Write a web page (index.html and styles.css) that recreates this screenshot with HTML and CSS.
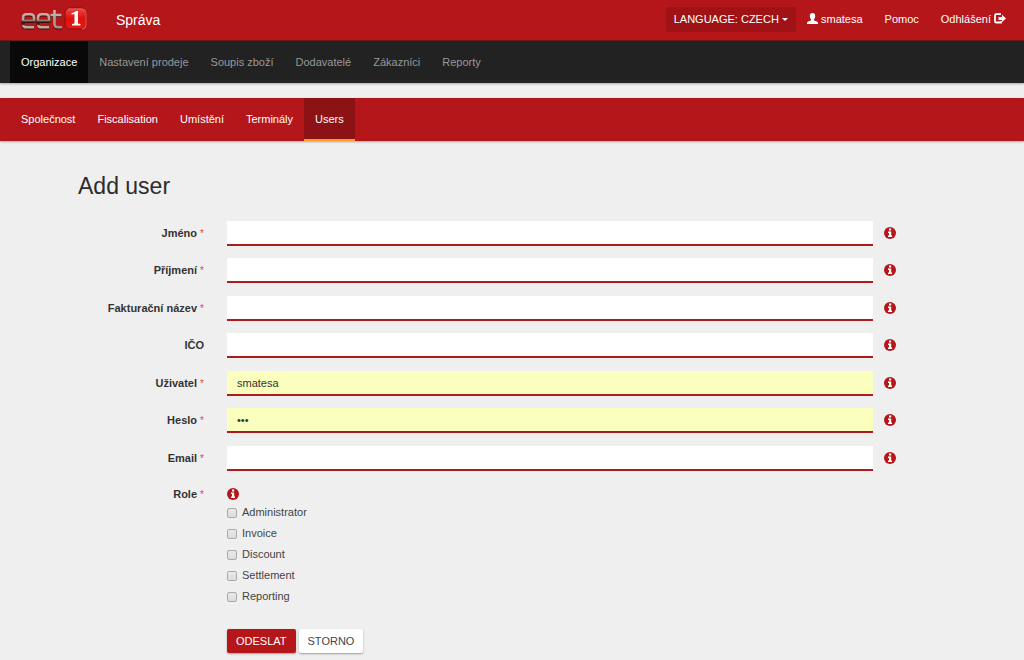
FILE: index.html
```html
<!DOCTYPE html>
<html lang="cs">
<head>
<meta charset="utf-8">
<title>Add user</title>
<link rel="stylesheet" href="styles.css">
</head>
<body>
<svg class="defs" aria-hidden="true">
  <symbol id="info" viewBox="0 0 12 12"><circle cx="6" cy="6" r="6" fill="#b5161a"/><path fill="#fff" d="M5 1.6h2.2v2H5zM4 4.5h3.2v4H8V10H4V8.500h1V6H4z"/></symbol>
</svg>
<header class="topbar">
  <a class="logo" href="#" aria-label="eet1">
    <svg width="67" height="24" viewBox="0 0 67 24">
      <defs>
        <linearGradient id="metal" gradientUnits="userSpaceOnUse" x1="0" y1="4" x2="0" y2="22"><stop offset="0" stop-color="#cdb9ae"/><stop offset=".5" stop-color="#b59a92"/><stop offset=".62" stop-color="#3a1210"/><stop offset=".74" stop-color="#4a1b18"/><stop offset=".82" stop-color="#c4a79e"/><stop offset="1" stop-color="#c4a79e"/></linearGradient>
        <linearGradient id="steel" gradientUnits="userSpaceOnUse" x1="0" y1="3" x2="0" y2="22"><stop offset="0" stop-color="#cdb9ae"/><stop offset="1" stop-color="#a78a82"/></linearGradient>
        <linearGradient id="tile" x1="0" y1="0" x2="0" y2="1"><stop offset="0" stop-color="#e8484a"/><stop offset=".5" stop-color="#e0100f"/><stop offset="1" stop-color="#e61b10"/></linearGradient>
      </defs>
      <g fill="none" stroke="#3b0f0e" stroke-width="3">
        <path d="M13 21H5.500Q2 21 2 17.500V11.500Q2 8 5.500 8H9.500Q13 8 13 11.500V14.500H3M28 21h-7.500Q17 21 17 17.500V11.500Q17 8 20.500 8H24.500Q28 8 28 11.500V14.500H18M33.500 4v13.500q0 3.500 3.500 3.500h4M29.500 8.500h11"/>
      </g>
      <g fill="none" stroke="url(#metal)" stroke-width="2.600">
        <path d="M13 20.300H5.500Q2 20.300 2 17V11Q2 7.300 5.500 7.300H9.500Q13 7.300 13 11V14H3M28 20.300h-7.500Q17 20.300 17 17V11Q17 7.300 20.500 7.300H24.500Q28 7.300 28 11V14H18"/>
        <path stroke="url(#steel)" d="M33.500 3v14q0 3.300 3.500 3.300h4M29.500 8h11"/>
      </g>
      <rect x="44" y="1" width="21" height="21" rx="5" fill="url(#tile)" stroke="#8d0d0e"/>
      <path d="M47 2h14q4 0 4 4v12q0 4-4 4" fill="none" stroke="#e2605f"/>
      <path fill="#fff" d="M50.500 6.500l5-2.500h1.500v12.500l2.500.5v1.500h-8.500V17l2.500-.5V7l-3 .5z"/>
    </svg>
  </a>
  <a class="brand" href="#">Správa</a>
  <nav class="account">
    <button class="language" type="button">LANGUAGE: CZECH <span class="caret"></span></button>
    <a href="#"><svg width="11" height="11" viewBox="0 0 11 11"><path fill="currentColor" d="M5.500 0C7.300 0 8.200 1.200 8.200 3c0 1.400-.6 2.600-1.300 3.300v.9c.7.700 3.900 1.100 4.100 2.600V11H0V9.800c.2-1.500 3.400-1.900 4.100-2.600v-.9C3.400 5.600 2.800 4.400 2.800 3 2.800 1.200 3.700 0 5.500 0z"/></svg> smatesa</a>
    <a href="#">Pomoc</a>
    <a href="#">Odhlášení <svg width="12" height="11" viewBox="0 0 12 11"><path fill="none" stroke="currentColor" stroke-width="1.800" d="M7 1.200H2.300Q1 1.200 1 2.500v5.700q0 1.300 1.300 1.300H7V8"/><path fill="currentColor" d="M4.500 4H8V1.800l4 3.600-4 3.600V7H4.500z"/></svg></a>
  </nav>
</header>
<nav class="mainnav">
  <a class="active" href="#">Organizace</a>
  <a href="#">Nastavení prodeje</a>
  <a href="#">Soupis zboží</a>
  <a href="#">Dodavatelé</a>
  <a href="#">Zákazníci</a>
  <a href="#">Reporty</a>
</nav>
<nav class="subnav">
  <a href="#">Společnost</a>
  <a href="#">Fiscalisation</a>
  <a href="#">Umístění</a>
  <a href="#">Terminály</a>
  <a class="active" href="#">Users</a>
</nav>
<main class="content">
  <h1>Add user</h1>
  <form>
    <div class="row"><label class="name" for="first">Jméno <sup>*</sup></label><input class="field" id="first" type="text"><svg class="info"><use href="#info"/></svg></div>
    <div class="row"><label class="name" for="last">Příjmení <sup>*</sup></label><input class="field" id="last" type="text"><svg class="info"><use href="#info"/></svg></div>
    <div class="row"><label class="name" for="billing">Fakturační název <sup>*</sup></label><input class="field" id="billing" type="text"><svg class="info"><use href="#info"/></svg></div>
    <div class="row"><label class="name" for="ico">IČO</label><input class="field" id="ico" type="text"><svg class="info"><use href="#info"/></svg></div>
    <div class="row"><label class="name" for="user">Uživatel <sup>*</sup></label><input class="field filled" id="user" type="text" value="smatesa"><svg class="info"><use href="#info"/></svg></div>
    <div class="row"><label class="name" for="pass">Heslo <sup>*</sup></label><input class="field filled" id="pass" type="password" value="abc"><svg class="info"><use href="#info"/></svg></div>
    <div class="row"><label class="name" for="email">Email <sup>*</sup></label><input class="field" id="email" type="email"><svg class="info"><use href="#info"/></svg></div>
    <div class="row roles" role="group" aria-labelledby="role">
      <span class="name" id="role">Role <sup>*</sup></span>
      <div class="options">
        <svg class="info"><use href="#info"/></svg>
        <label><input type="checkbox">Administrator</label>
        <label><input type="checkbox">Invoice</label>
        <label><input type="checkbox">Discount</label>
        <label><input type="checkbox">Settlement</label>
        <label><input type="checkbox">Reporting</label>
      </div>
    </div>
    <div class="actions">
      <button class="btn primary" type="submit">ODESLAT</button>
      <button class="btn" type="button">STORNO</button>
    </div>
  </form>
</main>
</body>
</html>
```
FILE: styles.css
```css
* { box-sizing: border-box; }
body {
  margin: 0;
  background: #efefef;
  color: #444;
  font: 11px/17px "Liberation Sans", Arial, sans-serif;
}
a { color: inherit; text-decoration: none; }
button, input { font: inherit; }
.defs { display: block; width: 0; height: 0; }
.topbar {
  display: flex;
  align-items: center;
  height: 41px;
  padding: 0 7px 2px 21px;
  background: #b5161a;
  border-bottom: 1px solid #6d1a18;
  color: #fff;
}
.logo, .logo svg { display: block; }
.brand { margin-left: 28px; padding-top: 3px; font-size: 14px; }
.account { display: flex; align-items: center; margin-left: auto; }
.account a { padding: 0 11px; }
.account svg { vertical-align: -1px; }
.language {
  height: 25px;
  padding: 0 8px;
  border: 0;
  border-radius: 2px;
  background: #9f1317;
  color: #fff;
}
.caret {
  display: inline-block;
  border: 3px solid transparent;
  border-top-color: #fff;
  border-bottom: 0;
  vertical-align: middle;
}
.mainnav, .subnav { display: flex; padding-left: 10px; line-height: 42px; }
.mainnav {
  background: #222;
  color: #999;
  box-shadow: 0 1px 2px rgba(0, 0, 0, .3);
}
.mainnav a, .subnav a { padding: 0 11px; }
.mainnav .active { background: #090909; color: #fff; }
.subnav {
  margin-top: 15px;
  background: #b5161a;
  color: #fff;
  line-height: 43px;
  box-shadow: 0 1px 2px rgba(0, 0, 0, .3);
}
.subnav .active { background: #8c1215; box-shadow: inset 0 -2px #ff9a27; }
.content { padding: 31px 128px 6px 78px; }
h1 { margin: 0 0 21px; color: #2c2c2c; font-size: 23px; font-weight: 400; line-height: 28px; }
.row { display: flex; align-items: center; margin-bottom: 12px; }
.name { width: 126px; margin-right: 23px; color: #333; font-weight: 700; text-align: right; }
sup { color: #e04a4a; font-size: 10px; font-weight: 400; line-height: 0; vertical-align: 0; }
.field {
  flex: 1;
  min-width: 0;
  height: 25px;
  padding: 0 10px;
  border: 0;
  border-bottom: 2px solid #ae1a1e;
  border-radius: 0;
  background: #fff;
  color: #333;
}
.row:nth-child(even) { margin-bottom: 13px; }
.filled { background: #faffbd; }
.info { flex: none; width: 12px; height: 12px; margin: 0 0 2px 11px; }
.row.roles { align-items: flex-start; margin: 15px 0 24px; }
.options { display: flex; flex-direction: column; gap: 4px; }
.options .info { margin: 2px 0 0; }
.options label { display: flex; align-items: center; }
.options input {
  appearance: none;
  width: 10px;
  height: 10px;
  margin: 1px 5px 0 0;
  border: 1px solid #aaa;
  border-radius: 2px;
  background: linear-gradient(#e9e9e9, #dcdcdc);
}
.actions { display: flex; gap: 3px; margin-left: 149px; }
.btn {
  height: 24px;
  padding: 0 9px;
  border: 0;
  border-radius: 2px;
  background: #fff;
  color: #444;
  box-shadow: 0 1px 2px rgba(0, 0, 0, .35);
}
.primary { background: #b5161a; color: #fff; }
```
